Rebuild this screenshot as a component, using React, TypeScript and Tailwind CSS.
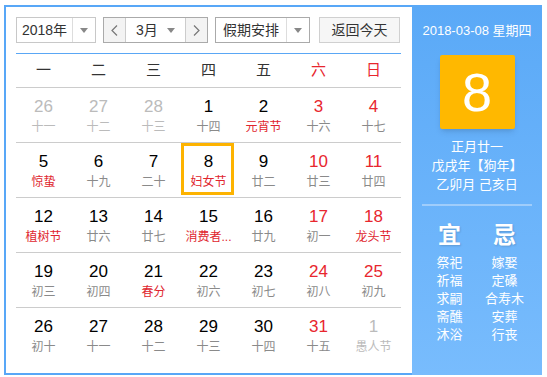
type Day = { n: number; l: string; out?: boolean; red?: boolean; fest?: boolean; today?: boolean };

const rows: Day[][] = [
  [
    { n: 26, l: "十一", out: true },
    { n: 27, l: "十二", out: true },
    { n: 28, l: "十三", out: true },
    { n: 1, l: "十四" },
    { n: 2, l: "元宵节", fest: true },
    { n: 3, l: "十六", red: true },
    { n: 4, l: "十七", red: true },
  ],
  [
    { n: 5, l: "惊蛰", fest: true },
    { n: 6, l: "十九" },
    { n: 7, l: "二十" },
    { n: 8, l: "妇女节", fest: true, today: true },
    { n: 9, l: "廿二" },
    { n: 10, l: "廿三", red: true },
    { n: 11, l: "廿四", red: true },
  ],
  [
    { n: 12, l: "植树节", fest: true },
    { n: 13, l: "廿六" },
    { n: 14, l: "廿七" },
    { n: 15, l: "消费者...", fest: true },
    { n: 16, l: "廿九" },
    { n: 17, l: "初一", red: true },
    { n: 18, l: "龙头节", red: true, fest: true },
  ],
  [
    { n: 19, l: "初三" },
    { n: 20, l: "初四" },
    { n: 21, l: "春分", fest: true },
    { n: 22, l: "初六" },
    { n: 23, l: "初七" },
    { n: 24, l: "初八", red: true },
    { n: 25, l: "初九", red: true },
  ],
  [
    { n: 26, l: "初十" },
    { n: 27, l: "十一" },
    { n: 28, l: "十二" },
    { n: 29, l: "十三" },
    { n: 30, l: "十四" },
    { n: 31, l: "十五", red: true },
    { n: 1, l: "愚人节", out: true },
  ],
];

const weekdays = ["一", "二", "三", "四", "五", "六", "日"];
const yi = ["祭祀", "祈福", "求嗣", "斋醮", "沐浴"];
const ji = ["嫁娶", "定磉", "合寿木", "安葬", "行丧"];

function Caret() {
  return <span className="w-0 h-0 border-l-[4px] border-r-[4px] border-t-[5px] border-l-transparent border-r-transparent border-t-[#888]" />;
}

function Chevron({ right }: { right?: boolean }) {
  return (
    <svg width="7" height="11" viewBox="0 0 7 11" fill="none" stroke="#777" strokeWidth="1.2">
      <path d={right ? "M1 0.5 L6 5.5 L1 10.5" : "M6 0.5 L1 5.5 L6 10.5"} />
    </svg>
  );
}

function Cell({ d }: { d: Day }) {
  const numColor = d.out ? "text-[#bbb]" : d.red ? "text-[#e8262e]" : "text-black";
  const lunarColor = d.out ? "text-[#bbb]" : d.fest ? "text-[#e0262e]" : "text-[#8a8a8a]";
  return (
    <div className="relative w-[55px] h-[54px] flex flex-col items-center pt-[9px]">
      {d.today && <div className="absolute left-0 top-0 w-[53px] h-[52px] border-[3px] border-[#fdb300]" />}
      <div className={`text-[17px] leading-[20px] ${numColor}`}>{d.n}</div>
      <div className={`text-[12px] leading-[20px] whitespace-nowrap ${lunarColor}`}>{d.l}</div>
    </div>
  );
}

export default function App() {
  return (
    <div
      className="w-[547px] h-[377px] bg-white pl-[4px] pt-[5px]"
      style={{ fontFamily: '"Liberation Sans", "Noto Sans CJK SC", sans-serif' }}
    >
      <div className="flex w-[538px] h-[370px]">
        <div className="w-[408px] h-[370px] border-l-2 border-t-2 border-b-2 border-[#58a7f7] pl-[10px] pt-[10px]">
          <div className="flex h-[26px] text-[14px] text-[#333]">
            <div className="w-[80px] flex border border-[#c8c8c8]">
              <div className="w-[55px] flex items-center justify-center">2018年</div>
              <div className="flex-1 flex items-center justify-center border-l border-[#ddd]">
                <Caret />
              </div>
            </div>
            <div className="ml-[7px] w-[105px] flex border border-[#aaa]">
              <div className="w-[22px] flex items-center justify-center bg-[#f3f3f3] border-r border-[#ccc]">
                <Chevron />
              </div>
              <div className="flex-1 flex items-center justify-between px-[10px] bg-white">
                <span>3月</span>
                <Caret />
              </div>
              <div className="w-[22px] flex items-center justify-center bg-[#f3f3f3] border-l border-[#ccc]">
                <Chevron right />
              </div>
            </div>
            <div className="ml-[7px] w-[95px] flex border border-[#aaa]">
              <div className="w-[70px] flex items-center justify-center">假期安排</div>
              <div className="flex-1 flex items-center justify-center border-l border-[#ddd]">
                <Caret />
              </div>
            </div>
            <div className="ml-[9px] w-[81px] flex items-center justify-center bg-[#f6f6f6] border border-[#d0d0d0]">
              返回今天
            </div>
          </div>

          <div className="w-[385px] mt-[10px] border-t border-[#5aa7f5]">
            <div className="grid grid-cols-7 h-[33px] items-center text-[15px] text-[#333]">
              {weekdays.map((w, i) => (
                <div key={w} className={`text-center ${i >= 5 ? "text-[#e8262e]" : ""}`}>
                  {w}
                </div>
              ))}
            </div>
            {rows.map((r, i) => (
              <div key={i} className="flex border-t border-[#cccccc]">
                {r.map((d, j) => (
                  <Cell key={j} d={d} />
                ))}
              </div>
            ))}
          </div>
        </div>

        <div className="w-[130px] h-[370px] bg-gradient-to-b from-[#5aa9f7] to-[#78bcfd] text-white flex flex-col items-center">
          <div className="mt-[17px] text-[13px] leading-[18px]">2018-03-08 星期四</div>
          <div className="mt-[15px] w-[75px] h-[74px] bg-[#ffb800] rounded-[2px] shadow-md flex items-center justify-center text-[54px] leading-none">
            8
          </div>
          <div className="mt-[8px] text-[13px] leading-[19px] text-center">
            <div>正月廿一</div>
            <div>戊戌年【狗年】</div>
            <div>乙卯月 己亥日</div>
          </div>
          <div className="mt-[10px] w-[110px] h-[2px] bg-[#9fcdfb]" />
          <div className="mt-[16px] flex w-[110px]">
            {[["宜", yi], ["忌", ji]].map(([t, list]) => (
              <div key={t as string} className="flex-1 flex flex-col items-center">
                <div className="text-[23px] leading-[26px] font-bold [text-shadow:1px_1px_2px_rgba(0,0,0,0.15)]">{t as string}</div>
                <div className="mt-[6px] text-[13px] leading-[18px] text-center">
                  {(list as string[]).map((x) => (
                    <div key={x}>{x}</div>
                  ))}
                </div>
              </div>
            ))}
          </div>
        </div>
      </div>
    </div>
  );
}
